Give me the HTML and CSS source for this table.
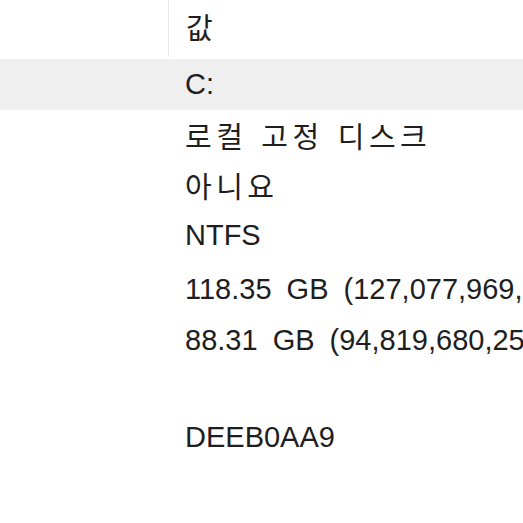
FILE: index.html
```html
<!DOCTYPE html>
<html>
<head>
    <meta charset="UTF-8">
    <title>Drive Properties</title>
    <link rel="stylesheet" href="styles.css">
</head>
<body>
    <div class="props">
        <div class="props-header">
            <div class="props-col-name"></div>
            <div class="props-col-value ko">값</div>
        </div>
        <div class="props-row selected">
            <div class="props-col-name"></div>
            <div class="props-col-value">C:</div>
        </div>
        <div class="props-row">
            <div class="props-col-name"></div>
            <div class="props-col-value ko">로컬 고정 디스크</div>
        </div>
        <div class="props-row">
            <div class="props-col-name"></div>
            <div class="props-col-value ko">아니요</div>
        </div>
        <div class="props-row">
            <div class="props-col-name"></div>
            <div class="props-col-value">NTFS</div>
        </div>
        <div class="props-row">
            <div class="props-col-name"></div>
            <div class="props-col-value">118.35 GB (127,077,969,536 바이트)</div>
        </div>
        <div class="props-row">
            <div class="props-col-name"></div>
            <div class="props-col-value">88.31 GB (94,819,680,256 바이트)</div>
        </div>
        <div class="props-row">
            <div class="props-col-name"></div>
            <div class="props-col-value"></div>
        </div>
        <div class="props-row">
            <div class="props-col-name"></div>
            <div class="props-col-value">DEEB0AA9</div>
        </div>
    </div>
</body>
</html>
```

FILE: styles.css
```css
body {
    margin: 0;
    background-color: #fff;
    font-family: "Liberation Sans", "Noto Sans CJK KR", sans-serif;
    color: #1e1e1e;
    overflow: hidden;
}

.props {
    width: 523px;
    overflow: hidden;
}

.props-header {
    display: flex;
    height: 59px;
}

.props-header .props-col-name {
    border-right: 1px solid #e8e8e8;
    height: 57px;
}

.props-header .props-col-value {
    padding-top: 5px;
}

.props-row {
    display: flex;
    align-items: center;
    height: 50.5px;
}

.props-row.selected {
    background-color: #efefef;
}

.props-col-name {
    width: 168px;
    flex-shrink: 0;
}

.props-col-value {
    padding-left: 17px;
    font-size: 29px;
    white-space: nowrap;
    word-spacing: 7px;
    overflow: hidden;
}

.ko {
    font-family: "Noto Sans CJK KR", sans-serif;
    font-size: 29px;
    letter-spacing: 4.5px;
    word-spacing: 3px;
}
```
